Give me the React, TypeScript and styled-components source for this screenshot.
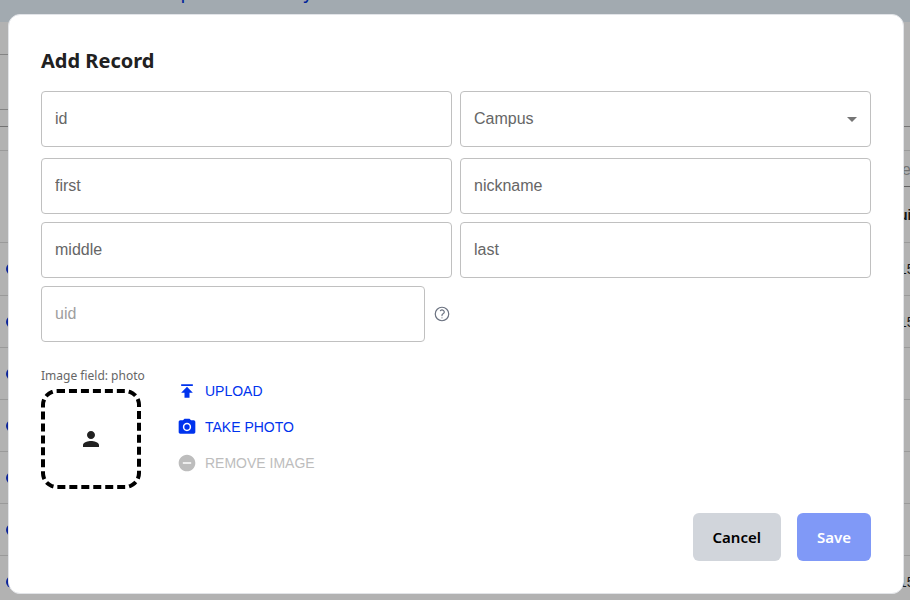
import React from "react";
import styled, { createGlobalStyle } from "styled-components";

const GlobalStyle = createGlobalStyle`
  *, *::before, *::after { box-sizing: border-box; }
  body {
    margin: 0;
    overflow: hidden;
    background: #ffffff;
    color: #212121;
    font-family: "Noto Sans", sans-serif;
    font-size: 16px;
  }
  button, input, select { font: inherit; margin: 0; }
`;

const Page = styled.div`
  height: 100vh;
  overflow: hidden;
`;

const TopBar = styled.header`
  display: flex;
  align-items: flex-end;
  height: 22px;
  padding: 0 160px 18px;
  background: #e8f4fd;
  color: #0033dd;
  line-height: 22px;
  font-weight: 500;
`;

const PageRow = styled.div<{ $height: number; $line?: string }>`
  display: flex;
  align-items: center;
  justify-content: space-between;
  height: ${(p) => p.$height}px;
  border-bottom: 1px solid ${(p) => p.$line ?? "#dddddd"};
  font-family: "Liberation Sans", sans-serif;
  font-size: 14px;
`;

const ToolLine = styled.div<{ $height: number }>`
  width: 50%;
  height: ${(p) => p.$height}px;
  border-bottom: 1px solid #bdbdbd;
`;

const Tools = styled.div`
  height: 105px;
  border-bottom: 1px solid #a5a5a5;
`;

const FilterRow = styled.div`
  display: flex;
  justify-content: flex-end;
  height: 36px;
`;

const Filter = styled.span`
  width: 8px;
  padding-top: 10px;
  border-bottom: 1px solid #8a8a8a;
  color: #a5a5a5;
  font-family: "Liberation Sans", sans-serif;
  font-size: 16px;
  line-height: 18px;
`;

const RowMark = styled.span`
  width: 12px;
  height: 12px;
  margin-left: 6px;
  border-radius: 50%;
  background: #1133dd;
`;

const EdgeText = styled.span<{ $strong?: boolean }>`
  width: 11px;
  margin-left: auto;
  font-weight: ${(p) => (p.$strong ? 700 : 400)};
`;

const Overlay = styled.div`
  position: fixed;
  inset: 0;
  display: flex;
  align-items: flex-start;
  justify-content: center;
  padding: 14px 6px 6px 8px;
  background: rgba(0, 0, 0, 0.3);
`;

const Dialog = styled.form`
  width: 100%;
  max-width: 896px;
  padding: 32px;
  border: 1px solid #e2e4e8;
  border-radius: 12px;
  background: #ffffff;
`;

const Title = styled.h2`
  margin: 0 0 16px;
  font-size: 20px;
  line-height: 28px;
  font-weight: 700;
`;

const Fields = styled.div`
  display: flex;
  flex-direction: column;
  gap: 8px;
`;

const FieldRow = styled.div<{ $spaced?: boolean }>`
  display: grid;
  grid-template-columns: 1fr 1fr;
  gap: 8px;
  margin-bottom: ${(p) => (p.$spaced ? 3 : 0)}px;
`;

const TextField = styled.input`
  width: 100%;
  min-width: 0;
  height: 56px;
  padding: 0 13px;
  border: 1px solid #c0c0c0;
  border-radius: 4px;
  background: #ffffff;
  color: #212121;
  font-family: "Liberation Sans", sans-serif;
  &::placeholder { color: #666666; opacity: 1; }
  &:disabled::placeholder { color: #9e9e9e; }
`;

const SelectBox = styled.div`
  display: grid;
  align-items: center;
  & > * { grid-area: 1 / 1; }
  & > svg { justify-self: end; margin-right: 7px; color: #757575; pointer-events: none; }
`;

const Select = styled.select`
  width: 100%;
  height: 56px;
  padding: 0 40px 2px 13px;
  border: 1px solid #c0c0c0;
  border-radius: 4px;
  appearance: none;
  background: #ffffff;
  color: #666666;
  font-family: "Liberation Sans", sans-serif;
`;

const HelpField = styled.div`
  display: flex;
  align-items: center;
  gap: 8px;
  padding-right: 1px;
`;

const IconButton = styled.button`
  display: flex;
  padding: 0;
  border: 0;
  background: none;
  color: #6b7280;
`;

const ImageSection = styled.section`
  display: flex;
  gap: 36px;
  margin-top: 26px;
`;

const ImageColumn = styled.div`
  width: 100px;
`;

const Caption = styled.div`
  margin-bottom: 5px;
  color: #666666;
  font-size: 12px;
  line-height: 16px;
  white-space: nowrap;
`;

const PhotoBox = styled.div`
  display: flex;
  align-items: center;
  justify-content: center;
  height: 100px;
  border: 4px dashed #000000;
  border-radius: 16px;
`;

const Actions = styled.div`
  display: flex;
  flex-direction: column;
  align-items: flex-start;
  padding-top: 5px;
`;

const ActionButton = styled.button`
  display: flex;
  align-items: center;
  gap: 8px;
  height: 36px;
  padding: 0;
  border: 0;
  background: none;
  color: #0033ee;
  font-family: "Liberation Sans", sans-serif;
  font-size: 14px;
  text-transform: uppercase;
  &:disabled { color: #bdbdbd; }
`;

const Footer = styled.footer`
  display: flex;
  justify-content: flex-end;
  gap: 16px;
  margin-top: 24px;
`;

const FooterButton = styled.button<{ $primary?: boolean }>`
  height: 48px;
  padding: 0 20px;
  border: 0;
  border-radius: 6px;
  background: ${(p) => (p.$primary ? "#8099f7" : "#d1d5db")};
  color: ${(p) => (p.$primary ? "#ffffff" : "#000000")};
  font-size: 15px;
  font-weight: 600;
`;

const Icon = ({ d, size }: { d: string; size: number }) => (
  <svg width={size} height={size} viewBox="0 0 24 24" fill="currentColor" fillRule="evenodd" aria-hidden="true">
    <path d={d} />
  </svg>
);

const icons = {
  arrow: "M7 10l5 5 5-5z",
  person:
    "M12 12c2.21 0 4-1.79 4-4s-1.79-4-4-4-4 1.79-4 4 1.79 4 4 4zm0 2c-2.67 0-8 1.34-8 4v2h16v-2c0-2.66-5.33-4-8-4z",
  publish: "M5 4v2h14V4H5zm0 10h4v6h6v-6h4l-7-7-7 7z",
  camera:
    "M15.2 12a3.2 3.2 0 1 1-6.4 0 3.2 3.2 0 0 1 6.4 0zM9 2L7.17 4H4c-1.1 0-2 .9-2 2v12c0 1.1.9 2 2 2h16c1.1 0 2-.9 2-2V6c0-1.1-.9-2-2-2h-3.17L15 2H9zm3 15c-2.76 0-5-2.24-5-5s2.24-5 5-5 5 2.24 5 5-2.24 5-5 5z",
  remove: "M12 2C6.48 2 2 6.48 2 12s4.48 10 10 10 10-4.48 10-10S17.52 2 12 2zm5 11H7v-2h10v2z",
};

const HelpIcon = () => (
  <svg width="18" height="18" viewBox="0 0 24 24" fill="none" stroke="currentColor" strokeWidth="1.6" strokeLinecap="round" strokeLinejoin="round" aria-hidden="true">
    <circle cx="12" cy="12" r="9" />
    <path d="M9.88 7.52c1.17-1.03 3.07-1.03 4.24 0 1.17 1.02 1.17 2.69 0 3.71-.2.18-.43.33-.67.45-.75.38-1.45 1.05-1.45 1.89v.5M12 17.1h.01" />
  </svg>
);

const tableRows = ["15", "15", "", "", "", "", "15"];

export default function App() {
  return (
    <>
      <GlobalStyle />
      <Page aria-hidden="true">
        <TopBar>Import class history</TopBar>
        <Tools>
          <ToolLine $height={33} />
          <ToolLine $height={55} />
        </Tools>
        <PageRow $height={24} />
        <FilterRow>
          <Filter>e</Filter>
        </FilterRow>
        <PageRow $height={56}>
          <EdgeText $strong>ui</EdgeText>
        </PageRow>
        {tableRows.map((value, i) => (
          <PageRow key={i} $height={i === 0 ? 53 : 52}>
            <RowMark />
            <EdgeText>{value}</EdgeText>
          </PageRow>
        ))}
      </Page>
      <Overlay>
        <Dialog role="dialog" aria-modal="true" aria-labelledby="dialog-title" onSubmit={(e) => e.preventDefault()}>
          <Title id="dialog-title">Add Record</Title>
          <Fields>
            <FieldRow $spaced>
              <TextField aria-label="id" placeholder="id" />
              <SelectBox>
                <Select aria-label="Campus" defaultValue="">
                  <option value="">Campus</option>
                </Select>
                <Icon d={icons.arrow} size={24} />
              </SelectBox>
            </FieldRow>
            <FieldRow>
              <TextField aria-label="first" placeholder="first" />
              <TextField aria-label="nickname" placeholder="nickname" />
            </FieldRow>
            <FieldRow>
              <TextField aria-label="middle" placeholder="middle" />
              <TextField aria-label="last" placeholder="last" />
            </FieldRow>
            <FieldRow>
              <HelpField>
                <TextField aria-label="uid" placeholder="uid" disabled />
                <IconButton type="button" aria-label="Help">
                  <HelpIcon />
                </IconButton>
              </HelpField>
            </FieldRow>
          </Fields>
          <ImageSection>
            <ImageColumn>
              <Caption>Image field: photo</Caption>
              <PhotoBox>
                <Icon d={icons.person} size={24} />
              </PhotoBox>
            </ImageColumn>
            <Actions>
              <ActionButton type="button">
                <Icon d={icons.publish} size={20} />
                Upload
              </ActionButton>
              <ActionButton type="button">
                <Icon d={icons.camera} size={20} />
                Take photo
              </ActionButton>
              <ActionButton type="button" disabled>
                <Icon d={icons.remove} size={20} />
                Remove image
              </ActionButton>
            </Actions>
          </ImageSection>
          <Footer>
            <FooterButton type="button">Cancel</FooterButton>
            <FooterButton type="submit" $primary>
              Save
            </FooterButton>
          </Footer>
        </Dialog>
      </Overlay>
    </>
  );
}
